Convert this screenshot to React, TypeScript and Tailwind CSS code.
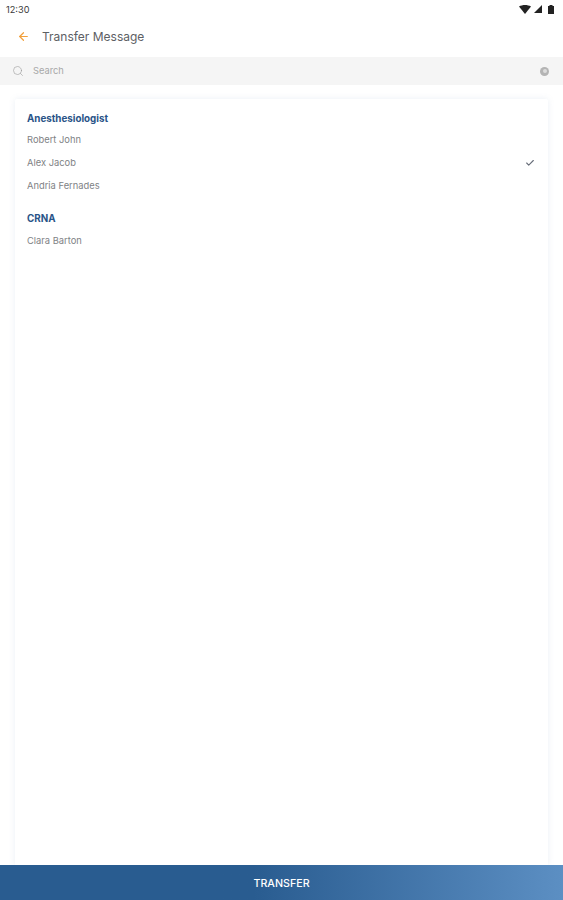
import { ArrowLeft, Check, Search } from "lucide-react";

function Group({ title, names, checked, className }: { title: string; names: string[]; checked?: string; className?: string }) {
  return (
    <div className={className}>
      <h2 className="h-[18px] text-[9.8px] leading-[18px] font-bold text-[#2a5488]">{title}</h2>
      <ul>
        {names.map((name) => (
          <li key={name} className="h-[23.3px] flex items-center justify-between text-[9.35px] text-[#808285]">
            {name}
            {name === checked && <Check size={10} strokeWidth={2.6} className="text-[#666c78] mr-[-1px]" />}
          </li>
        ))}
      </ul>
    </div>
  );
}

export default function App() {
  return (
    <div className="w-[563px] h-[900px] flex flex-col bg-white overflow-hidden font-['Inter',sans-serif]">
      <div className="h-[18px] shrink-0 flex items-center justify-between pl-[6px] pr-[9px]">
        <span className="text-[9.2px] text-[#3a3a3a] pt-[1px]">12:30</span>
        <div className="flex items-center gap-[3px]">
          <svg width="12" height="9" viewBox="0 0 12 9"><path d="M0 1.5C3.5-.5 8.5-.5 12 1.5L6 9z" fill="#222" /></svg>
          <svg width="8" height="8" viewBox="0 0 8 8"><path d="M8 0v8H0z" fill="#222" /></svg>
          <svg width="6" height="9" viewBox="0 0 6 9" className="ml-[3px]"><path d="M0 1h1.5V0h3v1H6v8H0z" fill="#222" /></svg>
        </div>
      </div>
      <div className="h-[37px] mb-[2px] shrink-0 flex items-center pl-[17px]">
        <ArrowLeft size={13} strokeWidth={2.2} className="text-[#f2a03c]" />
        <span className="ml-3 text-[12px] text-[#5d6064]">Transfer Message</span>
      </div>
      <div className="h-[28px] shrink-0 flex items-center bg-[#f5f5f5] pl-[12px] pr-[14px]">
        <Search size={12} strokeWidth={1.2} className="text-[#9a9a9a]" />
        <span className="ml-[9px] text-[9.3px] text-[#a8a8a8]">Search</span>
        <span className="ml-auto w-[9px] h-[9px] rounded-full bg-[#b4b4b4] flex items-center justify-center">
          <span className="w-[4px] h-[4px] rounded-full bg-[#dcdcdc]" />
        </span>
      </div>
      <div className="flex-1 min-h-0 pt-[14px] px-[15px]">
        <div className="h-full bg-white rounded-t-[2px] shadow-[0_0_6px_rgba(120,150,190,0.15)] pt-[11px] pl-[12px] pr-[14px]">
          <Group title="Anesthesiologist" names={["Robert John", "Alex Jacob", "Andria Fernades"]} checked="Alex Jacob" />
          <Group className="mt-[12px] [&>ul]:pt-[1.5px]" title="CRNA" names={["Clara Barton"]} />
        </div>
      </div>
      <button className="h-[35px] shrink-0 pt-[4px] bg-gradient-to-r from-[#295c90] from-45% to-[#5c8fc3] text-white text-[10.7px] font-medium">TRANSFER</button>
    </div>
  );
}
